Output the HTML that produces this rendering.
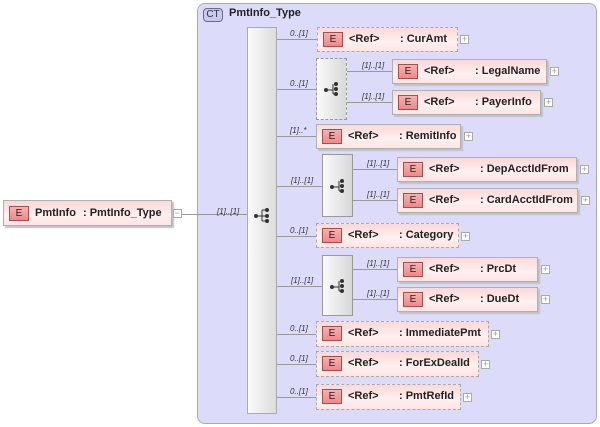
<!DOCTYPE html>
<html><head><style>
*{margin:0;padding:0;box-sizing:border-box}
body{width:600px;height:427px;background:#fff;position:relative;overflow:hidden;font-family:"Liberation Sans",sans-serif;}
div,span{position:absolute}
.ct{left:197px;top:3px;width:400px;height:421px;background:#dcdcfa;border:1px solid #a8a8b8;border-radius:8px}
.ctb{left:203px;top:8px;width:20px;height:14px;border:1px solid #6a6a90;border-radius:4px;background:#c8c8f0;font-size:10px;text-align:center;line-height:12px;color:#334}
.ctt{left:229px;top:7px;font-size:11px;font-weight:bold;color:#222}
.seq{left:247px;top:27px;width:30px;height:387px;border:1px solid #aaa;background:linear-gradient(90deg,#fafafa,#dcdcdc)}
.ch{width:31px;border:1px solid #999;background:linear-gradient(90deg,#fafafa,#d8d8d8)}
.ch.o{border:1px dashed #999}
.el{background:linear-gradient(#fcd8d8,#fff0f0 60%,#fde4e4);border:1px solid #b0b0b0;box-shadow:2px 2px 1px #c0c0c8;font-size:11px;font-weight:bold;color:#222}
.el.o{border:1px dashed #aaa;box-shadow:none}
.e{left:5px;top:4px;width:20px;height:15px;background:linear-gradient(#f8b0b0,#f08888);border:1px solid #a05050;font-size:10px;font-weight:normal;text-align:center;line-height:13px;color:#222}
.r{left:31px;top:5px}
.n{top:5px;white-space:nowrap}
.pl{width:9px;height:9px;border:1px solid #aaa;background:#fff;font-size:9px;line-height:6px;text-align:center;color:#999}
.h{height:1px;background:#999}
.lb{font-size:8px;font-style:italic;color:#333;white-space:nowrap}
</style></head><body>
<div class="ct"></div>
<div class="ctb">CT</div>
<div class="ctt">PmtInfo_Type</div>

<!-- root element -->
<div class="el" style="left:3px;top:200px;width:169px;height:26px"><span class="e" style="top:5px">E</span><span class="r" style="top:6px">PmtInfo</span><span class="n" style="left:79px;top:6px">: PmtInfo_Type</span></div>
<div class="pl" style="left:173px;top:209px">−</div>
<div class="h" style="left:182px;top:214px;width:65px"></div>
<div class="lb" style="left:217px;top:207px">[1]..[1]</div>

<div class="seq"></div>
<svg style="position:absolute;left:253px;top:207px" width="18" height="16"><circle cx="3" cy="9" r="2" fill="#333"/><path d="M3 9H9M9 3V14M9 3H13M9 9H13M9 14H13" stroke="#333" fill="none"/><circle cx="14" cy="3" r="2" fill="#333"/><circle cx="14" cy="9" r="2" fill="#333"/><circle cx="14" cy="14" r="2" fill="#333"/></svg>

<!-- lines from seq -->
<div class="h" style="left:277px;top:39px;width:40px"></div><div class="lb" style="left:290px;top:29px">0..[1]</div>
<div class="h" style="left:277px;top:89px;width:39px"></div><div class="lb" style="left:290px;top:79px">0..[1]</div>
<div class="h" style="left:277px;top:136px;width:39px"></div><div class="lb" style="left:290px;top:126px">[1]..*</div>
<div class="h" style="left:277px;top:186px;width:45px"></div><div class="lb" style="left:291px;top:176px">[1]..[1]</div>
<div class="h" style="left:277px;top:236px;width:39px"></div><div class="lb" style="left:290px;top:226px">0..[1]</div>
<div class="h" style="left:277px;top:286px;width:45px"></div><div class="lb" style="left:291px;top:276px">[1]..[1]</div>
<div class="h" style="left:277px;top:334px;width:39px"></div><div class="lb" style="left:290px;top:324px">0..[1]</div>
<div class="h" style="left:277px;top:364px;width:39px"></div><div class="lb" style="left:290px;top:354px">0..[1]</div>
<div class="h" style="left:277px;top:397px;width:39px"></div><div class="lb" style="left:290px;top:387px">0..[1]</div>

<!-- choices -->
<div class="ch o" style="left:316px;top:58px;height:62px"></div>
<div class="ch" style="left:322px;top:154px;height:63px"></div>
<div class="ch" style="left:322px;top:255px;height:61px"></div>
<svg style="position:absolute;left:323px;top:80px" width="18" height="18"><circle cx="3" cy="10" r="2" fill="#333"/><path d="M3 10H10M10 4V14M10 14H12" stroke="#333" fill="none"/><circle cx="13" cy="4" r="2" fill="#333"/><circle cx="13" cy="9" r="2" fill="#333"/><circle cx="13" cy="14" r="2" fill="#333"/></svg>
<svg style="position:absolute;left:329px;top:177px" width="18" height="18"><circle cx="3" cy="10" r="2" fill="#333"/><path d="M3 10H10M10 4V14M10 14H12" stroke="#333" fill="none"/><circle cx="13" cy="4" r="2" fill="#333"/><circle cx="13" cy="9" r="2" fill="#333"/><circle cx="13" cy="14" r="2" fill="#333"/></svg>
<svg style="position:absolute;left:329px;top:277px" width="18" height="18"><circle cx="3" cy="10" r="2" fill="#333"/><path d="M3 10H10M10 4V14M10 14H12" stroke="#333" fill="none"/><circle cx="13" cy="4" r="2" fill="#333"/><circle cx="13" cy="9" r="2" fill="#333"/><circle cx="13" cy="14" r="2" fill="#333"/></svg>

<!-- choice child lines -->
<div class="h" style="left:347px;top:71px;width:45px"></div><div class="lb" style="left:362px;top:61px">[1]..[1]</div>
<div class="h" style="left:347px;top:102px;width:45px"></div><div class="lb" style="left:362px;top:92px">[1]..[1]</div>
<div class="h" style="left:353px;top:169px;width:44px"></div><div class="lb" style="left:367px;top:159px">[1]..[1]</div>
<div class="h" style="left:353px;top:200px;width:44px"></div><div class="lb" style="left:367px;top:190px">[1]..[1]</div>
<div class="h" style="left:353px;top:269px;width:44px"></div><div class="lb" style="left:367px;top:259px">[1]..[1]</div>
<div class="h" style="left:353px;top:299px;width:44px"></div><div class="lb" style="left:367px;top:289px">[1]..[1]</div>

<!-- elements -->
<div class="el o" style="left:317px;top:27px;width:141px;height:25px"><span class="e">E</span><span class="r">&lt;Ref&gt;</span><span class="n" style="left:82px">: CurAmt</span></div><div class="pl" style="left:460px;top:35px">+</div>
<div class="el" style="left:392px;top:59px;width:155px;height:25px"><span class="e">E</span><span class="r">&lt;Ref&gt;</span><span class="n" style="left:82px">: LegalName</span></div><div class="pl" style="left:550px;top:67px">+</div>
<div class="el" style="left:392px;top:90px;width:149px;height:25px"><span class="e">E</span><span class="r">&lt;Ref&gt;</span><span class="n" style="left:82px">: PayerInfo</span></div><div class="pl" style="left:544px;top:98px">+</div>
<div class="el" style="left:316px;top:124px;width:145px;height:25px"><span class="e">E</span><span class="r">&lt;Ref&gt;</span><span class="n" style="left:82px">: RemitInfo</span></div><div class="pl" style="left:464px;top:132px">+</div>
<div class="el" style="left:397px;top:157px;width:180px;height:25px"><span class="e">E</span><span class="r">&lt;Ref&gt;</span><span class="n" style="left:82px">: DepAcctIdFrom</span></div><div class="pl" style="left:580px;top:165px">+</div>
<div class="el" style="left:397px;top:188px;width:181px;height:25px"><span class="e">E</span><span class="r">&lt;Ref&gt;</span><span class="n" style="left:82px">: CardAcctIdFrom</span></div><div class="pl" style="left:581px;top:196px">+</div>
<div class="el o" style="left:316px;top:223px;width:143px;height:25px"><span class="e">E</span><span class="r">&lt;Ref&gt;</span><span class="n" style="left:82px">: Category</span></div><div class="pl" style="left:461px;top:232px">+</div>
<div class="el" style="left:397px;top:257px;width:141px;height:25px"><span class="e">E</span><span class="r">&lt;Ref&gt;</span><span class="n" style="left:82px">: PrcDt</span></div><div class="pl" style="left:541px;top:265px">+</div>
<div class="el" style="left:397px;top:287px;width:141px;height:25px"><span class="e">E</span><span class="r">&lt;Ref&gt;</span><span class="n" style="left:82px">: DueDt</span></div><div class="pl" style="left:541px;top:295px">+</div>
<div class="el o" style="left:316px;top:321px;width:173px;height:26px"><span class="e">E</span><span class="r">&lt;Ref&gt;</span><span class="n" style="left:82px">: ImmediatePmt</span></div><div class="pl" style="left:491px;top:330px">+</div>
<div class="el o" style="left:316px;top:351px;width:163px;height:26px"><span class="e">E</span><span class="r">&lt;Ref&gt;</span><span class="n" style="left:82px">: ForExDealId</span></div><div class="pl" style="left:481px;top:360px">+</div>
<div class="el o" style="left:316px;top:384px;width:145px;height:26px"><span class="e">E</span><span class="r">&lt;Ref&gt;</span><span class="n" style="left:82px">: PmtRefId</span></div><div class="pl" style="left:463px;top:393px">+</div>
</body></html>
